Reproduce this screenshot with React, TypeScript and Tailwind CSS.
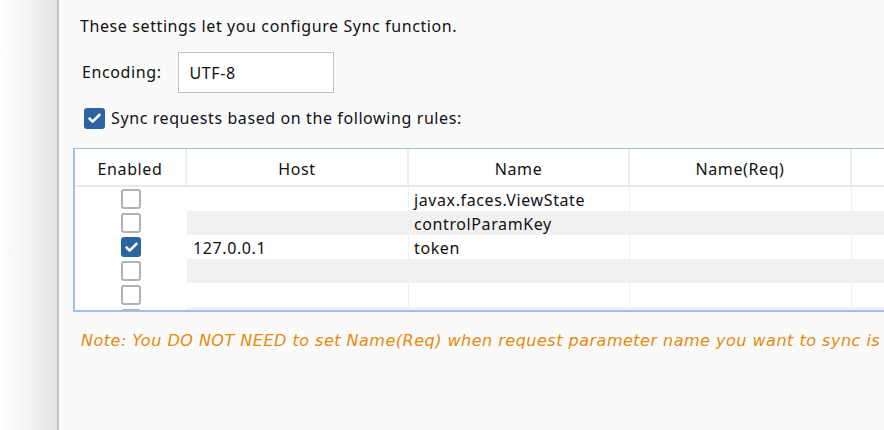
import { Check } from "lucide-react";

type Row = { enabled: boolean; host: string; name: string; nameReq: string };

const rows: Row[] = [
  { enabled: false, host: "", name: "javax.faces.ViewState", nameReq: "" },
  { enabled: false, host: "", name: "controlParamKey", nameReq: "" },
  { enabled: true, host: "127.0.0.1", name: "token", nameReq: "" },
  { enabled: false, host: "", name: "", nameReq: "" },
  { enabled: false, host: "", name: "", nameReq: "" },
  { enabled: false, host: "", name: "", nameReq: "" },
];

// checkbox like the swing look and feel one
function Box({ checked, size = "w-5 h-5" }: { checked: boolean; size?: string }) {
  if (checked) {
    return (
      <span className={`${size} flex items-center justify-center rounded-[3px] bg-[#2b64a0]`}>
        <Check className="w-[15px] h-[15px] text-white" strokeWidth={4} />
      </span>
    );
  }
  return <span className={`${size} block rounded-[3px] border-2 border-[#b2b2b2] bg-white`} />;
}

export default function App() {
  return (
    <div className="flex h-[430px] w-[884px] overflow-hidden bg-[#fafafa] font-['Noto_Sans',sans-serif] text-[16px] tracking-[0.6px] text-[#111]">
      {/* side panel, mostly out of view */}
      <div className="w-[57px] shrink-0 bg-gradient-to-r from-[#fefefe] via-[#f4f4f4] to-[#e2e2e2]">
        <div className="-ml-[6px] mt-[37px] text-[16px] leading-[20px] text-[#333]">t</div>
      </div>
      <div className="w-[2px] shrink-0 bg-[#c4c4c4]" />

      <div className="min-w-0 flex-1 pl-[14px]">
        <p className="ml-[7px] mt-[15px] leading-[22px]">These settings let you configure Sync function.</p>

        <div className="ml-[9px] mt-[15px] flex items-center gap-[16px]">
          <span className="-mt-[2px]">Encoding:</span>
          <div className="flex h-[41px] w-[156px] items-center border border-[#c2c2c2] bg-white pl-[11px]">UTF-8</div>
        </div>

        <div className="ml-[11px] mt-[13px] flex items-center gap-[6px]">
          <Box checked size="w-[21px] h-[21px]" />
          <span>Sync requests based on the following rules:</span>
        </div>

        <div className="mt-[18px] h-[164px] w-[900px] overflow-hidden border-l-2 border-t border-b-2 border-[#a3bfe3] bg-white">
          <div className="flex h-[38px] border-b-2 border-[#e9e9e9]">
            <div className="flex w-[112px] items-center justify-center border-r-2 border-[#ececec] pt-[3px]">Enabled</div>
            <div className="flex w-[222px] items-center justify-center border-r-2 border-[#ececec] pt-[3px]">Host</div>
            <div className="flex w-[221px] items-center justify-center border-r-2 border-[#ececec] pt-[3px]">Name</div>
            <div className="flex w-[222px] items-center justify-center border-r-2 border-[#ececec] pt-[3px]">Name(Req)</div>
            <div className="flex-1" />
          </div>
          {rows.map((r, i) => (
            <div key={i} className="flex h-[24px]">
              <div className="flex w-[112px] justify-center pt-[2px]">
                <Box checked={r.enabled} />
              </div>
              <div className={`flex flex-1 ${i % 2 === 1 ? "bg-[#f1f1f1]" : "bg-white"}`}>
                <div className="flex w-[222px] items-center border-r border-[#f0f0f0] pl-[6px] pt-[1px] leading-none">{r.host}</div>
                <div className="flex w-[221px] items-center border-r border-[#f0f0f0] pl-[5px] pt-[1px] leading-none">{r.name}</div>
                <div className="flex w-[222px] items-center border-r border-[#f0f0f0] pl-[5px] pt-[1px] leading-none">{r.nameReq}</div>
                <div className="flex-1" />
              </div>
            </div>
          ))}
        </div>

        <p className="ml-[8px] mt-[17px] whitespace-nowrap font-['DejaVu_Sans',sans-serif] text-[16px] italic tracking-[0.5px] text-[#e8890a]">
          Note: You DO NOT NEED to set Name(Req) when request parameter name you want to sync is the same as Name.
        </p>
      </div>
    </div>
  );
}
